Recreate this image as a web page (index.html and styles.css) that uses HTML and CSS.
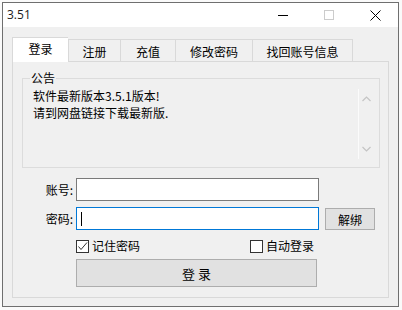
FILE: index.html
```html
<!DOCTYPE html>
<html lang="zh-CN">

<head>
    <meta charset="UTF-8" />
    <title>3.51</title>
    <link rel="stylesheet" href="styles.css">
</head>

<body>

    <div class="window">
        <div class="titlebar">
            <span class="title">3.51</span>
            <div class="caption">
                <span class="cap-btn">
                    <svg width="10" height="10" viewBox="0 0 10 10"><path d="M0 5.5H10" stroke="#000" stroke-width="1" /></svg>
                </span>
                <span class="cap-btn">
                    <svg width="10" height="10" viewBox="0 0 10 10"><rect x="0.5" y="0.5" width="9" height="9" fill="none" stroke="#ccc" stroke-width="1" /></svg>
                </span>
                <span class="cap-btn">
                    <svg width="11" height="11" viewBox="0 0 11 11"><path d="M0.5 0.5L10.5 10.5M10.5 0.5L0.5 10.5" stroke="#000" stroke-width="1" /></svg>
                </span>
            </div>
        </div>

        <div class="content">
            <div class="tabs">
                <div class="tab active">登录</div>
                <div class="tab w2">注册</div>
                <div class="tab w3">充值</div>
                <div class="tab w4">修改密码</div>
                <div class="tab w5">找回账号信息</div>
            </div>

            <div class="panel">
                <fieldset class="notice-box">
                    <legend>公告</legend>
                    <div class="notice">
                        <div class="notice-text">
                            <div class="line">软件最新版本3.5.1版本!</div>
                            <div class="line">请到网盘链接下载最新版.</div>
                        </div>
                        <div class="scrollbar">
                            <svg width="9" height="6" viewBox="0 0 9 6"><path d="M0.5 5L4.5 1L8.5 5" fill="none" stroke="#c4c4c4" stroke-width="1.2" /></svg>
                            <svg width="9" height="6" viewBox="0 0 9 6"><path d="M0.5 1L4.5 5L8.5 1" fill="none" stroke="#c4c4c4" stroke-width="1.2" /></svg>
                        </div>
                    </div>
                </fieldset>

                <div class="form">
                    <div class="row">
                        <span class="label">账号:</span>
                        <div class="field"></div>
                    </div>
                    <div class="row row-pass">
                        <span class="label">密码:</span>
                        <div class="field focused"><span class="caret"></span></div>
                        <button class="btn btn-small">解绑</button>
                    </div>
                    <div class="row row-check">
                        <label class="check first">
                            <span class="box">
                                <svg width="11" height="11" viewBox="0 0 11 11"><path d="M1.5 5.5L4 8.5L10 1.5" fill="none" stroke="#333" stroke-width="1" /></svg>
                            </span>
                            记住密码
                        </label>
                        <label class="check">
                            <span class="box"></span>
                            自动登录
                        </label>
                    </div>
                    <div class="row row-login">
                        <button class="btn btn-login">登 录</button>
                    </div>
                </div>
            </div>
        </div>
    </div>

</body>

</html>
```

FILE: styles.css
```css
body {
    margin: 0;
    background: #fafafa;
    font-family: "Noto Sans CJK SC", "Noto Sans", sans-serif;
    font-size: 12px;
    color: #000;
}

.window {
    width: 397px;
    height: 305px;
    margin: 2px 0 0 2px;
    border: 1px solid #6f6f6f;
    box-sizing: border-box;
    display: flex;
    flex-direction: column;
    background: #f0f0f0;
}

.titlebar {
    height: 24px;
    background: #fff;
    display: flex;
    align-items: center;
    justify-content: space-between;
}

.title {
    padding-left: 4px;
    font-family: "Open Sans", "Noto Sans", sans-serif;
    font-size: 12px;
    color: #1b1b1b;
    line-height: 14px;
}

.caption {
    display: flex;
    height: 24px;
}

.cap-btn {
    width: 46px;
    display: flex;
    align-items: center;
    justify-content: center;
}

.content {
    flex: 1;
    padding: 10px 9px 8px 9px;
    display: flex;
    flex-direction: column;
}

/* tab strip */
.tabs {
    display: flex;
    align-items: flex-end;
    height: 24px;
}

.tab {
    height: 22px;
    line-height: 22px;
    border: 1px solid #d9d9d9;
    border-bottom: none;
    border-right: none;
    box-sizing: border-box;
    text-align: center;
    font-size: 12px;
    padding-top: 1px;
}

.tab.active {
    width: 56px;
    height: 25px;
    background: #fff;
    line-height: 21px;
    margin-bottom: -1px;
    padding-top: 0;
    position: relative;
    z-index: 1;
}

.w2 { width: 52px; }
.w3 { width: 55px; }
.w4 { width: 77px; }
.w5 { width: 101px; border-right: 1px solid #d9d9d9; }

.panel {
    flex: 1;
    border: 1px solid #d9d9d9;
    display: flex;
    flex-direction: column;
}

/* notice group */
.notice-box {
    margin: 10px 8px 0 9px;
    padding: 5px 5px 8px 9px;
    border: 1px solid #dcdcdc;
    min-width: 0;
}

.notice-box legend {
    padding: 0 1px;
    margin-left: -2px;
    line-height: 12px;
    font-size: 12px;
}

.notice {
    display: flex;
    height: 70px;
}

.notice-text {
    flex: 1;
    padding-left: 1px;
    margin-top: -2px;
}

.line {
    height: 17px;
    line-height: 17px;
}

.scrollbar {
    width: 16px;
    border-left: 1px solid #fbfbfb;
    display: flex;
    flex-direction: column;
    align-items: center;
    justify-content: space-between;
    padding: 7px 0 7px;
    box-sizing: border-box;
}

/* login form */
.form {
    margin-top: 10px;
}

.row {
    display: flex;
    align-items: center;
}

.label {
    width: 63px;
    padding-right: 3px;
    box-sizing: border-box;
    text-align: right;
    line-height: 14px;
}

.field {
    width: 243px;
    height: 23px;
    background: #fff;
    border: 1px solid #7a7a7a;
    box-sizing: border-box;
    display: flex;
    align-items: center;
}

.field.focused {
    border-color: #0078d7;
}

.caret {
    width: 1px;
    height: 14px;
    background: #000;
    margin-left: 4px;
}

.row-pass {
    margin-top: 6px;
}

.btn {
    font-family: "Noto Sans CJK SC", "Noto Sans", sans-serif;
    font-size: 12px;
    color: #000;
    background: #e1e1e1;
    border: 1px solid #adadad;
    box-sizing: border-box;
    padding: 0;
}

.btn-small {
    width: 50px;
    height: 22px;
    margin-left: 6px;
    align-self: flex-end;
}

.row-check {
    margin-top: 9px;
    padding-left: 63px;
    height: 14px;
}

.check {
    display: flex;
    align-items: center;
    gap: 3px;
    line-height: 14px;
}

.check.first {
    width: 174px;
}

.box {
    width: 13px;
    height: 13px;
    border: 1px solid #333;
    box-sizing: border-box;
    background: #fff;
    display: flex;
    align-items: center;
    justify-content: center;
}

.row-login {
    margin-top: 6px;
    padding-left: 63px;
}

.btn-login {
    width: 241px;
    height: 28px;
    font-size: 13px;
}
```
